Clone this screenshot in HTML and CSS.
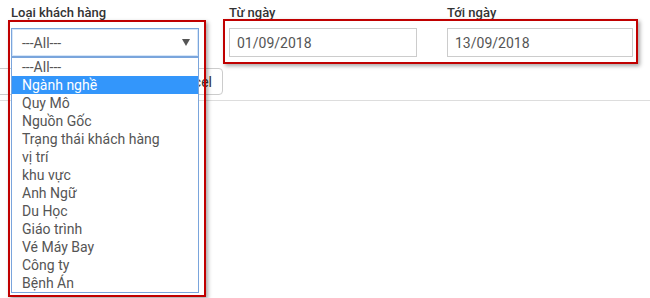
FILE: index.html
```html
<!DOCTYPE html>
<html lang="vi">
<head>
    <meta charset="UTF-8">
    <title>Báo cáo khách hàng</title>
    <link rel="stylesheet" href="styles.css">
</head>
<body>
    <div class="page">
        <div class="filters">
            <div class="field field-type">
                <label>Loại khách hàng</label>
                <div class="select-box">
                    <span>---All---</span>
                    <span class="caret"></span>
                </div>
                <ul class="dropdown">
                    <li>---All---</li>
                    <li class="active">Ngành nghề</li>
                    <li>Quy Mô</li>
                    <li>Nguồn Gốc</li>
                    <li>Trạng thái khách hàng</li>
                    <li>vị trí</li>
                    <li>khu vực</li>
                    <li>Anh Ngữ</li>
                    <li>Du Học</li>
                    <li>Giáo trình</li>
                    <li>Vé Máy Bay</li>
                    <li>Công ty</li>
                    <li>Bệnh Án</li>
                </ul>
                <div class="mark mark-type"></div>
            </div>
            <div class="field">
                <label>Từ ngày</label>
                <input type="text" class="date-input" value="01/09/2018">
            </div>
            <div class="field field-last">
                <label>Tới ngày</label>
                <input type="text" class="date-input" value="13/09/2018">
            </div>
            <div class="mark mark-dates"></div>
        </div>
        <div class="actions">
            <button class="btn btn-search">Tìm kiếm</button>
            <button class="btn">Xuất Excel</button>
        </div>
        <hr class="divider">
    </div>
</body>
</html>
```

FILE: styles.css
```css
html, body {
    height: 100%;
}
body {
    margin: 0;
    font-family: Roboto, "Noto Sans", Arial, sans-serif;
    color: #555;
    background: #fff;
}
.page {
    min-height: 298px;
    padding-top: 4px;
    box-sizing: border-box;
}
.filters {
    position: relative;
    display: flex;
    gap: 30px;
    padding-left: 11px;
}
.field {
    position: relative;
    width: 188px;
}
.field-last {
    width: 186px;
}
.field label {
    display: block;
    font-size: 13px;
    font-weight: 500;
    line-height: 17px;
    color: #333;
    margin-bottom: 7px;
}
.select-box {
    display: flex;
    align-items: center;
    justify-content: space-between;
    height: 29px;
    box-sizing: border-box;
    padding: 0 6px 0 10px;
    border: 1px solid #7aa5dc;
    box-shadow: inset 0 0 0 1px #d6e6f8;
    font-size: 14px;
    background: #fff;
}
.caret {
    width: 0;
    height: 0;
    border-left: 4px solid transparent;
    border-right: 4px solid transparent;
    border-top: 7px solid #555;
    margin-right: 2px;
}
.dropdown {
    position: absolute;
    top: 53px;
    left: 0;
    z-index: 2;
    width: 188px;
    box-sizing: border-box;
    margin: 0;
    padding: 0;
    list-style: none;
    background: #fff;
    border: 1px solid #7aa5dc;
    font-size: 14px;
}
.dropdown li {
    height: 18px;
    line-height: 18px;
    padding-left: 10px;
    white-space: nowrap;
}
.dropdown li.active {
    background: #3396fb;
    color: #fff;
}
.date-input {
    display: block;
    width: 100%;
    height: 29px;
    box-sizing: border-box;
    padding: 0 7px;
    border: 1px solid #ccc;
    font-family: inherit;
    font-size: 14px;
    color: #555;
}
.mark {
    position: absolute;
    z-index: 3;
    border: 2px solid #c00000;
    box-shadow: 2px 2px 4px rgba(0, 0, 0, 0.35);
    pointer-events: none;
}
.mark-type {
    left: -3px;
    top: 16px;
    width: 194px;
    height: 273px;
}
.mark-dates {
    left: 223px;
    top: 15px;
    width: 411px;
    height: 41px;
}
.actions {
    display: flex;
    gap: 6px;
    width: 227px;
    margin: 11px 0 0 -4px;
}
.btn {
    height: 27px;
    padding: 0 10px;
    border: 1px solid #ccc;
    border-radius: 4px;
    background: #fff;
    font-family: inherit;
    font-size: 14px;
    color: #333;
}
.btn-search {
    flex: 1;
}
.divider {
    margin: 5px 0 0;
    border: 0;
    border-top: 1px solid #ddd;
}
```
